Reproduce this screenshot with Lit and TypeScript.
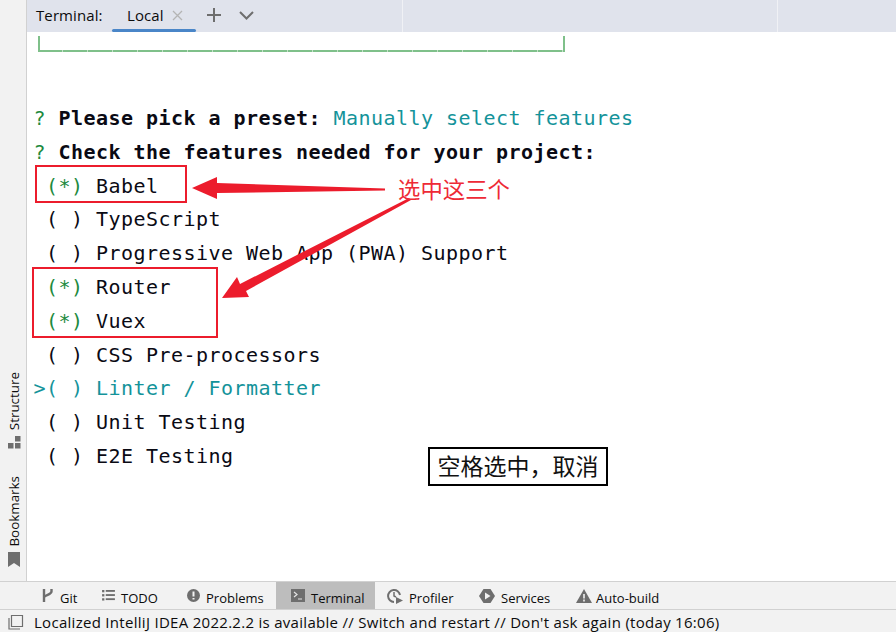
import { LitElement, html, css, svg } from "lit";
import { customElement } from "lit/decorators.js";

const UI = '"Open Sans", "Noto Sans", sans-serif';

@customElement("app-root")
export class AppRoot extends LitElement {
  static styles = css`
    :host { display: flex; flex-direction: column; width: 896px; height: 632px; position: relative; overflow: hidden; background: #fff; font-family: ${css([UI] as any)}; color: #0c0c0c; }
    .main { flex: 1; display: flex; min-height: 0; }
    .side { background: #f2f2f2; border-right: 1px solid #d1d1d1; display: flex; flex-direction: column; align-items: center; justify-content: flex-end; padding: 0 0 14px 2px; box-sizing: border-box; width: 27px; }
    .vtext { writing-mode: vertical-rl; transform: rotate(180deg); font-size: 13.4px; line-height: 14px; }
    .side svg { display: block; margin-top: 6px; }
    .side svg.mark { margin-top: 5px; }
    .side .gap { height: 27px; }
    .right { flex: 1; display: flex; flex-direction: column; min-width: 0; }
    .tabs { height: 32px; background: #e0e3ec; display: flex; align-items: center; padding: 0 0 2px 9px; box-sizing: border-box; font-size: 15px; letter-spacing: 0.1px; position: relative; }
    .tabs .lbl { width: 76px; }
    .tab { width: 84px; height: 30px; box-sizing: border-box; display: flex; align-items: center; padding-left: 15px; gap: 8px; position: relative; }
    .tab::after { content: ""; position: absolute; left: 0; right: 0; bottom: -2px; height: 3px; background: #4a86c8; border-radius: 2px; }
    .tabs .plus { margin-left: 11px; }
    .tabs .chev { margin-left: 18px; }
    .sep { position: absolute; top: 0; bottom: 0; width: 1px; background: #f0f1f5; }
    .term { flex: 1; padding: 4px 0 0 7px; margin-left: -0.5px; font-family: "DejaVu Sans Mono", monospace; font-size: 20px; letter-spacing: 0.46px; color: #0a0a14; }
    .ascii { position: relative; width: 527px; height: 16px; margin-left: 4.5px; box-sizing: border-box; border: solid #7fc08a; border-width: 0 2px 0 2px; margin-bottom: 50px; }
    .ascii::after { content: ""; position: absolute; left: -2px; right: -2px; bottom: 0; height: 2px; background: repeating-linear-gradient(90deg, #7fc08a 0 24px, #c4e0c8 24px 25px); }
    .line { height: 33.8px; line-height: 33.8px; white-space: pre; }
    .b { font-weight: 700; }
    .teal { color: #14939a; }
    .green { color: #1d8a3e; }
    .tools { height: 27px; background: #f2f2f2; border-top: 1px solid #d1d1d1; display: flex; font-size: 13px; padding-left: 28px; }
    .tool { display: flex; align-items: center; gap: 6px; height: 27px; padding: 4px 0 0 13px; box-sizing: border-box; white-space: nowrap; }
    .tool svg { margin-top: -4px; }
    .t1 { width: 61px; }
    .t2 { width: 85px; }
    .t3 { width: 102px; }
    .t4 { width: 99px; padding-left: 15px; }
    .t5 { width: 91px; padding-left: 12px; }
    .t6 { width: 97px; }
    .t7 { width: 110px; gap: 4px; }
    .tool.on { background: #bdbdbd; }
    .status { height: 23px; background: #f2f2f2; border-top: 1px solid #d1d1d1; padding: 1px 0 0 8px; display: flex; align-items: center; font-size: 15px; letter-spacing: 0.29px; gap: 10px; white-space: nowrap; box-sizing: border-box; }
    .rbox { position: absolute; border: 2px solid #ec1c2c; box-sizing: border-box; }
    .b1 { left: 35px; top: 165px; width: 152px; height: 38px; }
    .b2 { left: 32px; top: 267px; width: 186px; height: 71px; }
    .arrows { position: absolute; left: 0; top: 0; pointer-events: none; }
    .note { position: absolute; left: 398px; top: 172px; font-family: "Noto Sans CJK SC", sans-serif; font-size: 22.4px; line-height: 32px; color: #ee2a36; white-space: nowrap; }
    .tip { position: absolute; left: 428px; top: 447px; width: 180px; height: 39px; box-sizing: border-box; border: 2px solid #000; background: #fff; padding-bottom: 4px; display: flex; align-items: center; justify-content: center; font-family: "Noto Sans CJK SC", sans-serif; font-size: 23px; color: #111; white-space: nowrap; }
  `;

  private row(mark: string, name: string) {
    return html`<div class="line"> <span class=${mark === "*" ? "green" : ""}>(${mark})</span> <span>${name}</span></div>`;
  }

  render() {
    const g = "#6e6e6e";
    return html`
      <div class="main">
        <div class="side">
          <div class="vtext">Structure</div>
          <svg width="13" height="13" viewBox="0 0 13 13"><g fill=${g}><rect x="7" y="0" width="5.5" height="5.5"/><rect x="0" y="7" width="5.5" height="5.5"/><rect x="7" y="7" width="5.5" height="5.5"/></g></svg>
          <div class="gap"></div>
          <div class="vtext">Bookmarks</div>
          <svg class="mark" width="12" height="15" viewBox="0 0 12 15"><path fill=${g} d="M0 0h12v15L6 11 0 15z"/></svg>
        </div>
        <div class="right">
          <div class="tabs">
            <span class="lbl">Terminal:</span>
            <div class="tab">
              <span>Local</span>
              <svg width="11" height="11" viewBox="0 0 11 11"><path d="M1 1l9 9M10 1l-9 9" stroke="#b4b4b4" stroke-width="1.3" fill="none"/></svg>
            </div>
            <svg class="plus" width="14" height="14" viewBox="0 0 14 14"><path d="M7 0v14M0 7h14" stroke="#6e6e6e" stroke-width="2" fill="none"/></svg>
            <svg class="chev" width="15" height="9" viewBox="0 0 15 9"><path d="M1 1l6.5 6.5L14 1" stroke="#6e6e6e" stroke-width="2" fill="none"/></svg>
            <i class="sep" style="left:375px"></i><i class="sep" style="left:750px"></i>
          </div>
          <div class="term">
            <div class="ascii"></div>
            <div class="line"><span class="green">?</span> <span class="b">Please pick a preset:</span> <span class="teal">Manually select features</span></div>
            <div class="line"><span class="green">?</span> <span class="b">Check the features needed for your project:</span></div>
            ${this.row("*", "Babel")}
            ${this.row(" ", "TypeScript")}
            ${this.row(" ", "Progressive Web App (PWA) Support")}
            ${this.row("*", "Router")}
            ${this.row("*", "Vuex")}
            ${this.row(" ", "CSS Pre-processors")}
            <div class="line teal">>( ) Linter / Formatter</div>
            ${this.row(" ", "Unit Testing")}
            ${this.row(" ", "E2E Testing")}
          </div>
        </div>
      </div>
      <div class="tools">
        <div class="tool t1"><svg width="13" height="15" viewBox="0 0 13 15"><g fill="none" stroke=${g} stroke-width="2.4"><path d="M3 1v13"/><path d="M10.5 1v2.5c0 2.5-4 3-7 5"/></g></svg><span>Git</span></div>
        <div class="tool t2"><svg width="13" height="11" viewBox="0 0 14 12"><g fill=${g}><rect x="0" y="0" width="2.5" height="2.5"/><rect x="4" y="0" width="10" height="2"/><rect x="0" y="4.5" width="2.5" height="2.5"/><rect x="4" y="4.5" width="10" height="2"/><rect x="0" y="9" width="2.5" height="2.5"/><rect x="4" y="9" width="10" height="2"/></g></svg><span>TODO</span></div>
        <div class="tool t3"><svg width="13" height="13" viewBox="0 0 13 13"><circle cx="6.5" cy="6.5" r="6.5" fill=${g}/><path d="M6.5 2.5v5M6.5 9v1.6" stroke="#f2f2f2" stroke-width="2" fill="none"/></svg><span>Problems</span></div>
        <div class="tool t4 on"><svg width="14" height="13" viewBox="0 0 14 13"><rect width="14" height="13" fill=${g}/><path d="M3 3l3 2.5L3 8M7 10h4" stroke="#e4e4e4" stroke-width="1.2" fill="none"/></svg><span>Terminal</span></div>
        <div class="tool t5"><svg width="16" height="16" viewBox="0 0 16 16"><path d="M7 14A6 6 0 1 1 13 7" fill="none" stroke=${g} stroke-width="2"/><path d="M7 4v4l2 1" fill="none" stroke=${g} stroke-width="1.5"/><path d="M9 9l7 3.5L9 16z" fill=${g}/></svg><span>Profiler</span></div>
        <div class="tool t6"><svg width="16" height="16" viewBox="0 0 16 16"><path d="M4.5 1h7L16 8l-4.5 7h-7L0 8z" fill=${g}/><path d="M6 4.5L11.5 8 6 11.5z" fill="#f2f2f2"/></svg><span>Services</span></div>
        <div class="tool t7"><svg width="16" height="14" viewBox="0 0 16 14"><path d="M8 0l8 14H0z" fill=${g}/><path d="M8 5v4.5M8 10.5v2" stroke="#f2f2f2" stroke-width="1.6" fill="none"/></svg><span>Auto-build</span></div>
      </div>
      <div class="status">
        <svg width="16" height="16" viewBox="0 0 16 16"><path d="M3.5 1.5h11v11h-11z" fill="none" stroke=${g} stroke-width="1.2"/><path d="M1 4v11h11" fill="none" stroke=${g} stroke-width="1.2"/></svg>
        <span>Localized IntelliJ IDEA 2022.2.2 is available // Switch and restart // Don't ask again (today 16:06)</span>
      </div>
      <div class="rbox b1"></div>
      <div class="rbox b2"></div>
      <svg class="arrows" width="896" height="632" viewBox="0 0 896 632">
        ${svg`<path fill="#ec1c2c" d="M385 188.5L385 190.5L217 193L217 199L192 188L217 177L217 183Z"/>
        <path fill="#ec1c2c" d="M409 198L411 200L246 291L249 297L222 298L237 277L240 284Z"/>`}
      </svg>
      <div class="note">选中这三个</div>
      <div class="tip">空格选中，取消</div>
    `;
  }
}
